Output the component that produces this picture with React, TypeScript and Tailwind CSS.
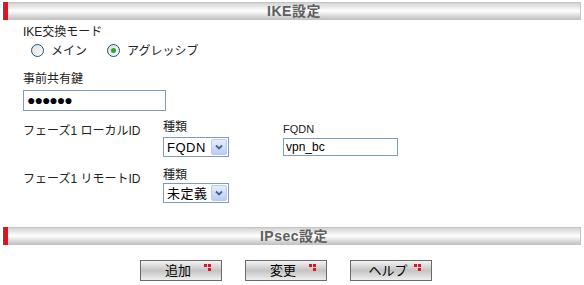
import React from "react";

const font = { fontFamily: '"Liberation Sans", "Noto Sans CJK JP", sans-serif' };

function SectionHeader({ title }: { title: string }) {
  return (
    <div className="mx-[3px] flex h-[18px]">
      <div className="w-[1px] bg-[#5a5a5a]" />
      <div className="w-[4px] bg-[#e0141e]" />
      <div className="flex flex-1 items-center justify-center border-y border-r border-[#c4c4c4] bg-linear-to-b from-[#d4d4d4] via-[#ffffff] to-[#c4c4c4]">
        <span className="text-[14px] font-bold leading-none tracking-[0.5px] text-[#5f5f5f]">{title}</span>
      </div>
    </div>
  );
}

function Radio({ checked, label }: { checked?: boolean; label: string }) {
  return (
    <label className="flex items-center gap-[7px]">
      <span className="flex h-[13px] w-[13px] items-center justify-center rounded-full border border-[#1c5180] bg-linear-to-br from-[#dcdcd7] to-white">
        {checked && <span className="h-[5px] w-[5px] rounded-full bg-[#2fa32f]" />}
      </span>
      <span className="text-[12px] leading-none text-[#222]">{label}</span>
    </label>
  );
}

function Select({ value }: { value: string }) {
  return (
    <div className="flex h-[20px] w-[66px] items-center border border-[#7f9db9] bg-white">
      <span className="flex-1 pl-[3px] text-[13px] leading-none tracking-[0.5px] text-black">{value}</span>
      <span className="m-[1px] flex h-[16px] w-[16px] items-center justify-center rounded-[2px] border border-[#b8cbf2] bg-linear-to-b from-[#e6eefc] to-[#b9cdf5]">
        <svg width="8" height="6" viewBox="0 0 8 6">
          <path d="M1 1.5 L4 4.5 L7 1.5" fill="none" stroke="#4d6185" strokeWidth="1.8" />
        </svg>
      </span>
    </div>
  );
}

function RedMark() {
  return (
    <span className="absolute right-[10px] top-[3px] grid grid-cols-[3px_3px] grid-rows-[3px_3px] gap-[1px]">
      <span className="bg-[#e0141e]" />
      <span className="bg-[#e0141e]" />
      <span />
      <span className="bg-[#e0141e]" />
    </span>
  );
}

function Btn({ label }: { label: string }) {
  return (
    <button className="relative flex h-[21px] w-[82px] items-center justify-center border border-[#6a6a6a] bg-linear-to-b from-[#f4f4f4] via-[#c4c4c4] to-[#eeeeee] pr-[6px] text-[13px] leading-none text-black">
      {label}
      <RedMark />
    </button>
  );
}

export default function App() {
  return (
    <div className="h-[285px] w-[584px] overflow-hidden bg-white pt-[2px] text-[#222]" style={font}>
      <SectionHeader title="IKE設定" />

      <div className="pl-[23px]">
        <div className="mt-[6px] text-[12px] leading-[12px]">IKE交換モード</div>
        <div className="mt-[6px] flex items-center gap-[20px] pl-[8px]">
          <Radio label="メイン" />
          <Radio checked label="アグレッシブ" />
        </div>

        <div className="mt-[16px] text-[12px] leading-[12px]">事前共有鍵</div>
        <div className="mt-[5px] flex h-[21px] w-[143px] items-center border border-[#7f9db9] pl-[3px] text-[14px] tracking-[-1px] text-black">
          ●●●●●●
        </div>

        <div className="mt-[10px] grid grid-cols-[140px_120px_1fr] text-[12px] leading-[12px]">
          <div className="pt-[4px]">フェーズ1 ローカルID</div>
          <div>
            <div>種類</div>
            <div className="mt-[4px]">
              <Select value="FQDN" />
            </div>
          </div>
          <div>
            <div className="pt-[2px] text-[11px]">FQDN</div>
            <div className="mt-[3px] flex h-[18px] w-[115px] items-center border border-[#7f9db9] pl-[2px] text-[12px] text-black">
              vpn_bc
            </div>
          </div>

          <div className="pt-[16px]">フェーズ1 リモートID</div>
          <div className="pt-[12px]">
            <div>種類</div>
            <div className="mt-[2px]">
              <Select value="未定義" />
            </div>
          </div>
          <div />
        </div>
      </div>

      <div className="mt-[24px]">
        <SectionHeader title="IPsec設定" />
      </div>

      <div className="mt-[15px] flex gap-[23px] pl-[140px]">
        <Btn label="追加" />
        <Btn label="変更" />
        <Btn label="ヘルプ" />
      </div>
    </div>
  );
}
